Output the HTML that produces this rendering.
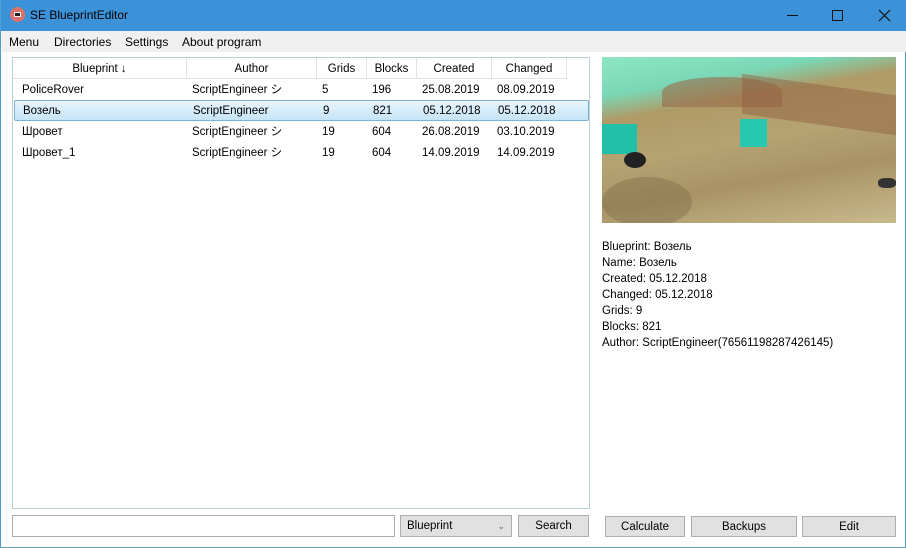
<!DOCTYPE html>
<html><head><meta charset="utf-8"><style>
*{margin:0;padding:0;box-sizing:border-box}
body{width:906px;height:548px;overflow:hidden;font-family:"Liberation Sans","Noto Sans CJK JP",sans-serif;font-size:11.5px;color:#000;background:#fff;position:relative}
.win{position:absolute;left:0;top:0;width:906px;height:548px;border:1px solid #4a9fd8;border-top:none;border-bottom-color:#6aa0b0;background:#fff}
.title{position:absolute;left:0;top:0;width:906px;height:31px;background:#3b92d8;color:#000}
.title .t{position:absolute;left:29px;top:8px;font-size:12px}
.icon{position:absolute;left:9px;top:7px;width:15px;height:15px;border-radius:50%;background:#d9736b}
.icon i{position:absolute;left:4px;top:5px;width:7px;height:5px;background:#222;border:1px solid #eee}
.ctl{position:absolute;top:0;height:31px;width:46px;text-align:center}
.menu{position:absolute;left:1px;top:31px;width:904px;height:21px;background:#f0f0f0}
.menu span{position:absolute;top:4px;font-size:12px}
.list{position:absolute;left:11px;top:57px;width:578px;height:452px;border:1px solid #b8d0d4;background:#fff}
.hdr{position:absolute;top:0;height:21px;border-right:1px solid #e3e3e3;text-align:center;line-height:22px;border-bottom:1px solid #e3e3e3}
.row{position:absolute;left:0;height:21px;width:576px;line-height:23px}
.row span{position:absolute}
.sel{background:linear-gradient(#e9f5fc,#c5e4f7);border:1px solid #7fb3d6;border-radius:2px;left:1px;width:575px;line-height:21px}
.btn{position:absolute;height:21px;background:#e1e1e1;border:1px solid #adadad;text-align:center;line-height:21px}
.info{position:absolute;left:601px;top:239px;line-height:16px}
.img{position:absolute;left:601px;top:57px;width:294px;height:166px;overflow:hidden;background:linear-gradient(170deg,#8ee6c4 0%,#7ad8b6 18%,#b09a66 30%,#b5a372 50%,#a99366 70%,#c8b98c 100%)}
</style></head><body>
<div class="win">
<div class="title"><div class="icon"><i></i></div><span class="t">SE BlueprintEditor</span>
<div class="ctl" style="left:768px"><div style="position:absolute;left:18px;top:15px;width:11px;height:1px;background:#111"></div></div>
<div class="ctl" style="left:814px"><div style="position:absolute;left:17px;top:10px;width:11px;height:11px;border:1px solid #111"></div></div>
<div class="ctl" style="left:860px"><svg width="46" height="31"><path d="M18 10 L29 21 M29 10 L18 21" stroke="#111" stroke-width="1.2"/></svg></div>
</div>
<div class="menu"><span style="left:7px">Menu</span><span style="left:52px">Directories</span><span style="left:123px">Settings</span><span style="left:180px">About program</span></div>
<div class="list">
<div class="hdr" style="left:0;width:174px">Blueprint ↓</div>
<div class="hdr" style="left:174px;width:130px">Author</div>
<div class="hdr" style="left:304px;width:50px">Grids</div>
<div class="hdr" style="left:354px;width:50px">Blocks</div>
<div class="hdr" style="left:404px;width:75px">Created</div>
<div class="hdr" style="left:479px;width:75px">Changed</div>
<div class="row" style="top:21px"><span style="left:9px">PoliceRover</span><span style="left:179px">ScriptEngineer シ</span><span style="left:309px">5</span><span style="left:359px">196</span><span style="left:409px">25.08.2019</span><span style="left:484px">08.09.2019</span></div>
<div class="row sel" style="top:42px"><span style="left:8px">Возель</span><span style="left:178px">ScriptEngineer</span><span style="left:308px">9</span><span style="left:358px">821</span><span style="left:408px">05.12.2018</span><span style="left:483px">05.12.2018</span></div>
<div class="row" style="top:63px"><span style="left:9px">Шровет</span><span style="left:179px">ScriptEngineer シ</span><span style="left:309px">19</span><span style="left:359px">604</span><span style="left:409px">26.08.2019</span><span style="left:484px">03.10.2019</span></div>
<div class="row" style="top:84px"><span style="left:9px">Шровет_1</span><span style="left:179px">ScriptEngineer シ</span><span style="left:309px">19</span><span style="left:359px">604</span><span style="left:409px">14.09.2019</span><span style="left:484px">14.09.2019</span></div>
</div>
<div style="position:absolute;left:11px;top:515px;width:383px;height:22px;border:1px solid #acacac;background:#fff"></div>
<div class="btn" style="left:399px;top:515px;width:112px;height:22px;text-align:left;padding-left:6px">Blueprint<span style="position:absolute;right:6px;top:0;font-size:9px;color:#666">⌄</span></div>
<div class="btn" style="left:517px;top:515px;width:71px;height:22px">Search</div>
<div class="btn" style="left:604px;top:516px;width:80px">Calculate</div>
<div class="btn" style="left:690px;top:516px;width:106px">Backups</div>
<div class="btn" style="left:801px;top:516px;width:94px">Edit</div>
<div class="img">
<div style="position:absolute;left:60px;top:20px;width:120px;height:30px;background:#9a6a4a;border-radius:50% 50% 0 0;opacity:.6"></div>
<div style="position:absolute;left:140px;top:28px;width:160px;height:40px;background:#8d5a3e;opacity:.45;transform:skewY(8deg)"></div>
<div style="position:absolute;left:0;top:120px;width:90px;height:50px;background:#7b6a45;opacity:.4;border-radius:50%"></div>
<div style="position:absolute;left:0;top:67px;width:35px;height:30px;background:#22c0a8"></div>
<div style="position:absolute;left:22px;top:95px;width:22px;height:16px;background:#222;border-radius:50%"></div>
<div style="position:absolute;left:138px;top:62px;width:27px;height:28px;background:#28c8b0"></div>
<div style="position:absolute;left:276px;top:121px;width:18px;height:10px;background:#333;border-radius:40%"></div>
</div>
<div class="info">Blueprint: Возель<br>Name: Возель<br>Created: 05.12.2018<br>Changed: 05.12.2018<br>Grids: 9<br>Blocks: 821<br>Author: ScriptEngineer(76561198287426145)</div>
</div>
</body></html>
